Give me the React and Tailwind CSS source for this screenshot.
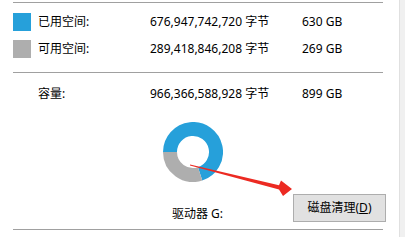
import React from 'react';

const font = "font-['Noto_Sans','Noto_Sans_CJK_SC',sans-serif]";

// rows of the usage table
const rows = [
  { color: 'bg-[#26a0da]', label: '已用空间:', bytes: '676,947,742,720 字节', size: '630 GB' },
  { color: 'bg-[#aeaeae]', label: '可用空间:', bytes: '289,418,846,208 字节', size: '269 GB' },
];

const Donut = () => (
  <svg width="60" height="60" viewBox="0 0 60 60">
    <path d="M37.11 51.87 A23 23 0 1 0 7 30" fill="none" stroke="#26a0da" strokeWidth="14" />
    <path d="M7 30 A23 23 0 0 0 37.11 51.87" fill="none" stroke="#aeaeae" strokeWidth="14" />
  </svg>
);

export default function App() {
  return (
    <div className={`relative flex w-[405px] h-[237px] bg-white text-[12px] text-black ${font}`}>
      <div className="w-[399px] pl-[13px] pt-[2px]">
        <div className="w-[370px]">
          <div className="h-px bg-[#a0a0a0]" />

          {/* used / free */}
          <div className="mt-[10px] grid grid-cols-[25px_112px_152px_1fr] items-center gap-y-[9px]">
            {rows.map((r) => (
              <React.Fragment key={r.label}>
                <div className={`w-[18px] h-[18px] ${r.color}`} />
                <div className="leading-[18px]">{r.label}</div>
                <div className="leading-[18px]">{r.bytes}</div>
                <div className="leading-[18px]">{r.size}</div>
              </React.Fragment>
            ))}
          </div>

          <div className="mt-[14px] h-px bg-[#a0a0a0]" />

          {/* capacity */}
          <div className="mt-[12px] grid grid-cols-[25px_112px_152px_1fr] items-center h-[18px]">
            <div />
            <div>容量:</div>
            <div>966,366,588,928 字节</div>
            <div>899 GB</div>
          </div>

          <div className="mt-[19px] ml-[150px] w-[60px] h-[60px]">
            <Donut />
          </div>

          {/* drive + cleanup button */}
          <div className="mt-[12px] flex items-end h-[28px]">
            <div className="ml-[159px] leading-[16px]">驱动器 G:</div>
            <button className="ml-auto mr-[-3px] w-[93px] h-[28px] bg-[#e1e1e1] border border-[#adadad] leading-none">
              磁盘清理(<span className="underline">D</span>)
            </button>
          </div>

          <div className="mt-[7px] h-px bg-[#a0a0a0]" />
        </div>
      </div>
      <div className="flex-1 bg-[#f0f0f0] border-l border-[#e0e0e0]" />

      {/* annotation arrow */}
      <svg className="absolute inset-0 pointer-events-none" width="405" height="237" viewBox="0 0 405 237">
        <polygon
          points="190,164.6 279,185.3 281,180.5 292,189 283,196 279,189.6 190,165.4"
          fill="#ec2a22"
        />
      </svg>
    </div>
  );
}
